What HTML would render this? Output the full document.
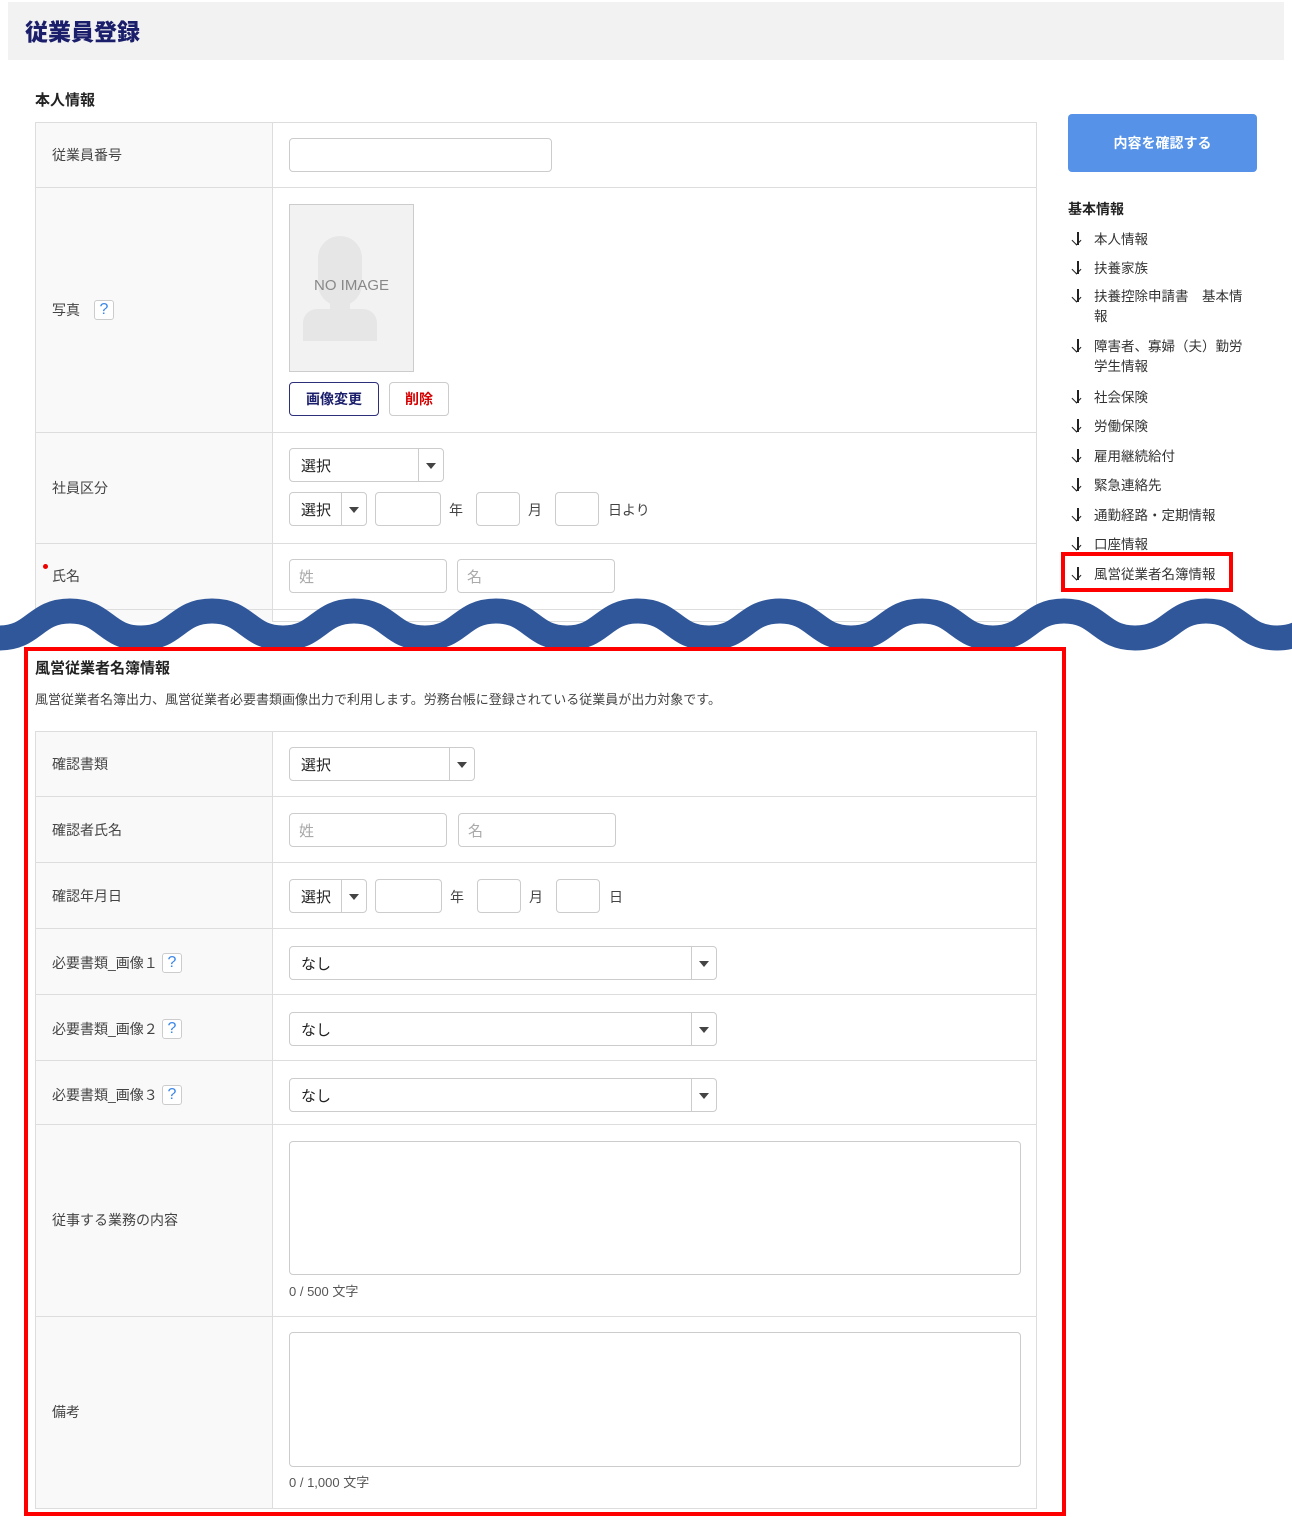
<!DOCTYPE html>
<html><head><meta charset="utf-8"><style>
*{box-sizing:border-box;margin:0;padding:0}
body{width:1292px;height:1517px;background:#fff;position:relative;overflow:hidden;font-family:"Liberation Sans","Noto Sans CJK JP",sans-serif;color:#333;font-size:14px}
.a{position:absolute}
.hdr{left:8px;top:2px;width:1276px;height:58px;background:#f2f2f2}
.title{left:25px;top:13px;font-size:23px;font-weight:900;color:#1b1f6b}
.h2{font-size:15px;font-weight:bold;color:#222}
.tbl{border:1px solid #ddd;border-right:1px solid #ddd;background:#fff}
.lab{background:#f9f9f9;border-right:1px solid #ddd}
.hl{height:1px;background:#ddd}
.lt{font-size:14px;color:#444}
.in{border:1px solid #ccc;border-radius:4px;background:#fff;height:34px}
.sel{border:1px solid #ccc;border-radius:4px;background:#fff;height:34px;font-size:15px;color:#222;padding:6px 11px}
.sel .ar{position:absolute;right:0;top:0;width:25px;height:32px;border-left:1px solid #ccc}
.sel .ar:after{content:"";position:absolute;left:7px;top:14px;border-left:5px solid transparent;border-right:5px solid transparent;border-top:6px solid #444}
.ph{font-size:15px;color:#aaa;padding:6px 9px}
.q{width:20px;height:20px;border:1px solid #ccc;border-radius:3px;color:#3a86e8;font-size:16px;text-align:center;line-height:18px;background:#fff}
.nav{left:1070px;font-size:13.5px;color:#333}
.nav i{display:inline-block;width:24px;height:14px;vertical-align:-2px;position:relative}
.nav i:before{content:"";position:absolute;left:7px;top:0;width:1.6px;height:13px;background:#222}
.nav i:after{content:"";position:absolute;left:3px;top:5px;width:6px;height:6px;border-right:1.6px solid #222;border-bottom:1.6px solid #222;transform:rotate(45deg)}
</style></head><body>
<div class="a hdr"></div>
<div class="a title">従業員登録</div>
<div class="a h2" style="left:35px;top:89px">本人情報</div>

<div class="a tbl" style="left:35px;top:122px;width:1002px;height:500px"></div>
<div class="a lab" style="left:36px;top:123px;width:237px;height:499px"></div>
<div class="a hl" style="left:35px;top:187px;width:1002px"></div>
<div class="a hl" style="left:35px;top:432px;width:1002px"></div>
<div class="a hl" style="left:35px;top:543px;width:1002px"></div>
<div class="a hl" style="left:35px;top:609px;width:1002px"></div>

<div class="a lt" style="left:52px;top:145px">従業員番号</div>
<div class="a in" style="left:289px;top:138px;width:263px"></div>
<div class="a lt" style="left:52px;top:300px">写真</div>
<div class="a q" style="left:94px;top:300px">?</div>
<div class="a" style="left:289px;top:204px;width:125px;height:168px;background:#f2f2f2;border:1px solid #ccc;overflow:hidden">
 <div class="a" style="left:28px;top:31px;width:44px;height:70px;border-radius:22px;background:#e6e6e6"></div>
 <div class="a" style="left:40px;top:80px;width:20px;height:30px;background:#e6e6e6"></div>
 <div class="a" style="left:13px;top:104px;width:74px;height:32px;border-radius:14px 14px 0 0;background:#e6e6e6"></div>
 <div class="a" style="left:0;top:72px;width:123px;text-align:center;font-size:15px;color:#888">NO IMAGE</div>
</div>
<div class="a" style="left:289px;top:382px;width:90px;height:34px;border:1px solid #2d2f7a;border-radius:4px;text-align:center;line-height:32px;font-weight:bold;color:#1b1f6b;font-size:14px">画像変更</div>
<div class="a" style="left:389px;top:382px;width:60px;height:34px;border:1px solid #ccc;border-radius:4px;text-align:center;line-height:32px;font-weight:bold;color:#d40000;font-size:14px">削除</div>

<div class="a lt" style="left:52px;top:478px">社員区分</div>
<div class="a sel" style="left:289px;top:448px;width:155px">選択<div class="ar"></div></div>
<div class="a sel" style="left:289px;top:492px;width:78px">選択<div class="ar"></div></div>
<div class="a in" style="left:375px;top:492px;width:66px"></div>
<div class="a lt" style="left:449px;top:500px">年</div>
<div class="a in" style="left:476px;top:492px;width:44px"></div>
<div class="a lt" style="left:528px;top:500px">月</div>
<div class="a in" style="left:555px;top:492px;width:44px"></div>
<div class="a lt" style="left:608px;top:500px">日より</div>
<div class="a" style="left:43px;top:564px;width:5px;height:5px;border-radius:50%;background:#e00"></div>
<div class="a lt" style="left:52px;top:566px">氏名</div>
<div class="a in ph" style="left:289px;top:559px;width:158px">姓</div>
<div class="a in ph" style="left:457px;top:559px;width:158px">名</div>

<div class="a" style="left:1068px;top:114px;width:189px;height:58px;background:#5592e8;border-radius:4px;color:#fff;font-weight:bold;font-size:14px;text-align:center;line-height:58px">内容を確認する</div>
<div class="a h2" style="left:1068px;top:199px;font-size:14px">基本情報</div>
<div class="a nav" style="top:228px"><i></i>本人情報</div>
<div class="a nav" style="top:257px"><i></i>扶養家族</div>
<div class="a nav" style="top:287px;line-height:20px"><i></i>扶養控除申請書　基本情<br><span style="padding-left:24px">報</span></div>
<div class="a nav" style="top:337px;line-height:20px"><i></i>障害者、寡婦（夫）勤労<br><span style="padding-left:24px">学生情報</span></div>
<div class="a nav" style="top:386px"><i></i>社会保険</div>
<div class="a nav" style="top:415px"><i></i>労働保険</div>
<div class="a nav" style="top:445px"><i></i>雇用継続給付</div>
<div class="a nav" style="top:474px"><i></i>緊急連絡先</div>
<div class="a nav" style="top:504px"><i></i>通勤経路・定期情報</div>
<div class="a nav" style="top:533px"><i></i>口座情報</div>
<div class="a nav" style="top:563px"><i></i>風営従業者名簿情報</div>
<div class="a" style="left:1061px;top:552px;width:172px;height:40px;border:4px solid #f00"></div>

<div class="a" style="left:0;top:646px;width:1292px;height:871px;background:#fff"></div>
<svg class="a" style="left:0;top:0" width="1292" height="700"><path id="wv" d="" fill="none" stroke="#30579a" stroke-width="25"/></svg>
<script>
(function(){var d="M-1 638",x=-1,up=true;while(x<1300){var nx=x+71,ny=up?611:638;d+=" C"+(x+35.5)+" "+(up?638:611)+" "+(x+35.5)+" "+ny+" "+nx+" "+ny;x=nx;up=!up;}document.getElementById("wv").setAttribute("d",d);})();
</script>

<div class="a h2" style="left:35px;top:657px">風営従業者名簿情報</div>
<div class="a" style="left:35px;top:689px;font-size:13px;color:#444">風営従業者名簿出力、風営従業者必要書類画像出力で利用します。労務台帳に登録されている従業員が出力対象です。</div>

<div class="a tbl" style="left:35px;top:731px;width:1002px;height:778px"></div>
<div class="a lab" style="left:36px;top:732px;width:237px;height:776px"></div>
<div class="a hl" style="left:35px;top:796px;width:1002px"></div>
<div class="a hl" style="left:35px;top:862px;width:1002px"></div>
<div class="a hl" style="left:35px;top:928px;width:1002px"></div>
<div class="a hl" style="left:35px;top:994px;width:1002px"></div>
<div class="a hl" style="left:35px;top:1060px;width:1002px"></div>
<div class="a hl" style="left:35px;top:1124px;width:1002px"></div>
<div class="a hl" style="left:35px;top:1316px;width:1002px"></div>

<div class="a lt" style="left:52px;top:754px">確認書類</div>
<div class="a sel" style="left:289px;top:747px;width:186px">選択<div class="ar"></div></div>
<div class="a lt" style="left:52px;top:820px">確認者氏名</div>
<div class="a in ph" style="left:289px;top:813px;width:158px">姓</div>
<div class="a in ph" style="left:458px;top:813px;width:158px">名</div>
<div class="a lt" style="left:52px;top:886px">確認年月日</div>
<div class="a sel" style="left:289px;top:879px;width:78px">選択<div class="ar"></div></div>
<div class="a in" style="left:375px;top:879px;width:67px"></div>
<div class="a lt" style="left:450px;top:887px">年</div>
<div class="a in" style="left:477px;top:879px;width:44px"></div>
<div class="a lt" style="left:529px;top:887px">月</div>
<div class="a in" style="left:556px;top:879px;width:44px"></div>
<div class="a lt" style="left:609px;top:887px">日</div>

<div class="a lt" style="left:52px;top:953px">必要書類_画像１</div>
<div class="a q" style="left:162px;top:953px">?</div>
<div class="a sel" style="left:289px;top:946px;width:428px">なし<div class="ar"></div></div>
<div class="a lt" style="left:52px;top:1019px">必要書類_画像２</div>
<div class="a q" style="left:162px;top:1019px">?</div>
<div class="a sel" style="left:289px;top:1012px;width:428px">なし<div class="ar"></div></div>
<div class="a lt" style="left:52px;top:1085px">必要書類_画像３</div>
<div class="a q" style="left:162px;top:1085px">?</div>
<div class="a sel" style="left:289px;top:1078px;width:428px">なし<div class="ar"></div></div>

<div class="a lt" style="left:52px;top:1210px">従事する業務の内容</div>
<div class="a in" style="left:289px;top:1141px;width:732px;height:134px"></div>
<div class="a" style="left:289px;top:1281px;font-size:13px;color:#555">0 / 500 文字</div>
<div class="a lt" style="left:52px;top:1402px">備考</div>
<div class="a in" style="left:289px;top:1332px;width:732px;height:135px"></div>
<div class="a" style="left:289px;top:1472px;font-size:13px;color:#555">0 / 1,000 文字</div>

<div class="a" style="left:24px;top:647px;width:1042px;height:869px;border:4px solid #f00"></div>
</body></html>
